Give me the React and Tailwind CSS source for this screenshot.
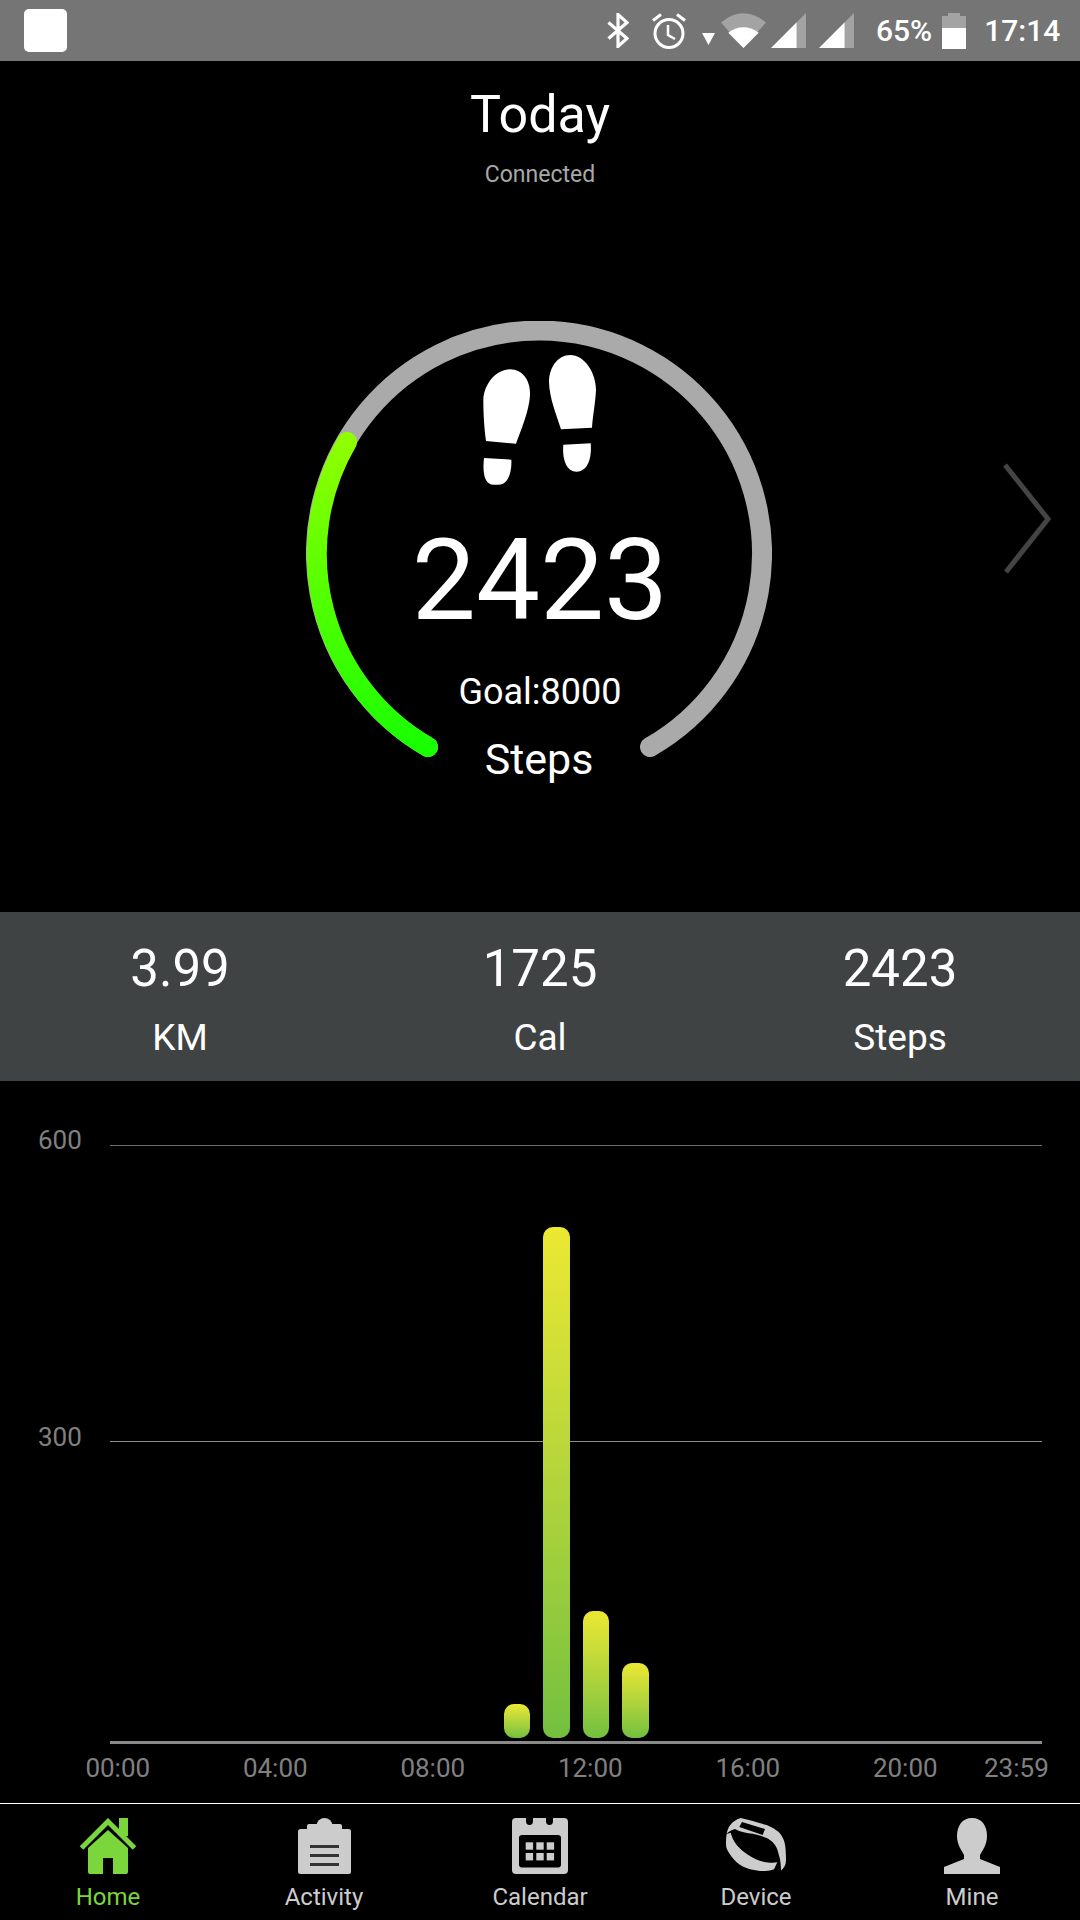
const Bluetooth = () => (
  <svg width="22" height="35" viewBox="0 0 22 35" fill="none" stroke="#fff" strokeWidth="3.2">
    <path d="M1.5 9.5 L20 25.5 L11 33.5 V1.5 L20 9.5 L1.5 25.5" />
  </svg>
);

const Alarm = () => (
  <svg width="34" height="36" viewBox="0 0 34 36" fill="none" stroke="#fff" strokeWidth="3">
    <circle cx="17" cy="20.5" r="14" />
    <path d="M16 12 V22 L23 26" strokeWidth="2.5" />
    <path d="M1 7.5 L9 1.5 M33 7.5 L25 1.5" />
  </svg>
);

const Wifi = () => (
  <svg width="45" height="35" viewBox="0 0 45 35">
    <path d="M22.5 35 L0 9.5 Q22.5 -9 45 9.5 Z" fill="#a3a3a3" />
    <path d="M22.5 35 L7.3 19.7 Q22.5 9 37.7 19.7 Z" fill="#fff" />
  </svg>
);

const Signal = () => (
  <svg width="35" height="35" viewBox="0 0 35 35">
    <path d="M25.7 9.3 L35 0 V35 H25.7 Z" fill="#a3a3a3" />
    <path d="M0 35 L25.7 9.3 V35 Z" fill="#fff" />
  </svg>
);

const Battery = () => (
  <svg width="24" height="36" viewBox="0 0 24 36">
    <path d="M6 0 H18 V3 H24 V15 H0 V3 H6 Z" fill="#a3a3a3" />
    <rect x="0" y="15" width="24" height="21" fill="#fff" />
  </svg>
);

const StatusBar = () => (
  <div className="flex h-[61px] items-center bg-[#757575] text-[30px] font-medium text-white">
    <div className="ml-[24px] h-[43px] w-[43px] rounded-[5px] bg-white" />
    <div className="ml-[540px]"><Bluetooth /></div>
    <div className="ml-[23px]"><Alarm /></div>
    <svg className="ml-[16px] mt-[17px]" width="13" height="12" viewBox="0 0 13 12">
      <path d="M0 0 H13 L6.5 12 Z" fill="#fff" />
    </svg>
    <div className="ml-[6px]"><Wifi /></div>
    <div className="ml-[5px]"><Signal /></div>
    <div className="ml-[13px]"><Signal /></div>
    <span className="ml-[22px]">65%</span>
    <div className="ml-[10px]"><Battery /></div>
    <span className="ml-[18px]">17:14</span>
  </div>
);

const Footprints = () => (
  <svg className="ml-[2px]" width="160" height="160" viewBox="0 0 480 480" fill="#fff">
    <path d="M78 303 C72 260 70 215 70 180 C72 130 110 88 150 88 C190 88 212 125 210 165 C208 210 185 265 168 311 Z" />
    <path d="M72 354 L154 359 C156 395 145 434 115 434 L100 434 C78 434 66 410 72 354 Z" />
    <path d="M303 268 C290 225 268 175 267 125 C268 80 295 45 330 45 C375 45 408 100 408 150 C406 190 398 230 396 263 Z" />
    <path d="M310 314 L392 310 C396 350 385 395 350 395 C320 395 306 360 310 314 Z" />
  </svg>
);

const Gauge = () => (
  <div className="relative ml-[306px] mt-[131px] flex h-[466px] w-[466px] flex-col items-center text-white">
    <svg className="absolute inset-0" width="466" height="466" viewBox="0 0 466 466" fill="none" strokeWidth="20" strokeLinecap="round">
      <defs>
        <linearGradient id="ringGreen" gradientUnits="userSpaceOnUse" x1="0" y1="121" x2="0" y2="426">
          <stop offset="0" stopColor="#8fff00" />
          <stop offset="1" stopColor="#19ff00" />
        </linearGradient>
      </defs>
      <path d="M122 426 A223 223 0 1 1 344 426" stroke="#aaaaaa" />
      <path d="M122 426 A223 223 0 0 1 41 121" stroke="url(#ringGreen)" />
    </svg>
    <div className="relative mt-[19px] flex flex-col items-center">
      <Footprints />
      <div className="ml-[2px] mt-[26px] text-[114px] leading-[108px]">2423</div>
      <div className="ml-[2px] mt-[36px] text-[36px] leading-[44px]">Goal:8000</div>
      <div className="mt-[20px] text-[43px] leading-[50px]">Steps</div>
    </div>
  </div>
);

const stats = [
  { value: "3.99", label: "KM" },
  { value: "1725", label: "Cal" },
  { value: "2423", label: "Steps" },
];

const Stats = () => (
  <div className="grid h-[169px] grid-cols-3 bg-[#3f4344] pt-[29px] text-center text-white">
    {stats.map((s) => (
      <div key={s.label}>
        <div className="text-[51px] leading-[56px]">{s.value}</div>
        <div className="mt-[19px] text-[37px] leading-[44px]">{s.label}</div>
      </div>
    ))}
  </div>
);

const bars = ["h-[33.5px]", "h-[510.5px]", "h-[126.5px]", "h-[74.5px]"];

const xLabels = ["00:00", "04:00", "08:00", "12:00", "16:00", "20:00"];

const Chart = () => (
  <div className="h-[722px] pt-[44px]">
    <div className="flex items-start">
      <div className="w-[110px] pl-[38px] text-[26px] leading-[30px] text-[#808080]">
        <div>600</div>
        <div className="mt-[267px]">300</div>
      </div>
      <div className="relative mt-[20px] h-[599px] w-[932px] border-b-[3px] border-[#8a8a8a]">
        <div className="absolute inset-x-0 top-0 h-px bg-[#6e6e6e]" />
        <div className="absolute inset-x-0 top-[296px] h-px bg-[#8a8a8a]" />
        <div className="absolute inset-0 flex items-end gap-[13px] pb-[3.5px] pl-[393.5px]">
          {bars.map((h) => (
            <div key={h} className={`w-[26.5px] rounded-[10px] bg-linear-to-b from-[#ece832] to-[#72c03f] ${h}`} />
          ))}
        </div>
      </div>
    </div>
    <div className="mt-[9px] flex pl-[39px] text-center text-[26px] leading-[30px] text-[#808080]">
      {xLabels.map((t) => (
        <div key={t} className="w-[157.5px]">{t}</div>
      ))}
      <div className="w-[61px] whitespace-nowrap">23:59</div>
    </div>
  </div>
);

const HomeIcon = () => (
  <svg width="60" height="56" viewBox="0 0 60 56" fill="#7ad63a">
    <path d="M3.5 30 L30 3.5 L56.5 30" fill="none" stroke="#7ad63a" strokeWidth="5" />
    <rect x="41" y="0" width="9" height="18" />
    <path d="M10 30 L30 12 L50 30 V54 Q50 56 48 56 H35 V40 H25 V56 H12 Q10 56 10 54 Z" />
  </svg>
);

const ActivityIcon = () => (
  <svg width="53" height="56" viewBox="0 0 53 56" fill="#cccccc">
    <circle cx="26.5" cy="8" r="8" />
    <rect x="9" y="6" width="35" height="10" rx="2" />
    <rect x="0" y="11" width="53" height="45" rx="2.5" />
    <g fill="#333333">
      <rect x="12" y="27" width="29" height="3" />
      <rect x="12" y="36" width="29" height="3" />
      <rect x="12" y="45" width="29" height="3" />
    </g>
  </svg>
);

const CalendarIcon = () => (
  <svg width="56" height="56" viewBox="0 0 56 56">
    <path fillRule="evenodd" fill="#cccccc" d="M4 0 H14 V3 Q14 7 17.5 7 Q21 7 21 3 V0 H34 V3 Q34 7 37.5 7 Q41 7 41 3 V0 H52 Q56 0 56 4 V52 Q56 56 52 56 H4 Q0 56 0 52 V4 Q0 0 4 0 Z M10 17 Q7 17 7 20 V46.5 Q7 49.5 10 49.5 H46 Q49 49.5 49 46.5 V20 Q49 17 46 17 Z" />
    <g fill="#cccccc">
      <rect x="13.7" y="24.3" width="7.4" height="7.4" />
      <rect x="24.3" y="24.3" width="7.4" height="7.4" />
      <rect x="34.7" y="24.3" width="7.4" height="7.4" />
      <rect x="13.7" y="35" width="7.4" height="7.4" />
      <rect x="24.3" y="35" width="7.4" height="7.4" />
      <rect x="34.7" y="35" width="7.4" height="7.4" />
    </g>
  </svg>
);

const DeviceIcon = () => (
  <svg width="60" height="56" viewBox="0 0 60 56" fill="#cccccc">
    <path fillRule="evenodd" d="M0.7 16 C1.5 10 5 3 14.7 0 C24 2 33 5 40.7 7 C48 10 54 14 55.7 18 C59 23 60 29 60 42 C60 47 58 50 55 52.7 C55 46 54 40 53.3 38.7 C52 33 51 30 49 27 C46 23 43 21 40.7 20 C36 18 30 16 22.3 15.3 C16 14 11 12.5 9 11 C5 12 2 14 0.7 16 Z M16 4 L39 11 L36.7 17 L13.3 9 Z" />
    <path d="M0.7 16 L4.7 14.7 C6 20 8 23 10.7 27 C14 31 18 34 22.3 37 C27 40 33 43 37.3 43.7 C43 45 48 45 51.3 44.3 L48 51.3 C42 53.5 36 53 34 53 C28 52 22 51 17.3 48.7 C12 46 8 42 5.7 38.7 C2 34 0 30 0 27 C0 23 0 19 0.7 16 Z" />
  </svg>
);

const MineIcon = () => (
  <svg width="56" height="56" viewBox="0 0 56 56" fill="#cccccc">
    <path d="M28 0 C38 0 43 8 43 18 C43 27 38 33 36 37 V41 L56 49 V56 H0 V49 L20 41 V37 C18 33 13 27 13 18 C13 8 18 0 28 0 Z" />
  </svg>
);

const tabs = [
  { label: "Home", Icon: HomeIcon, color: "text-[#7ad63a]" },
  { label: "Activity", Icon: ActivityIcon, color: "text-[#cccccc]" },
  { label: "Calendar", Icon: CalendarIcon, color: "text-[#cccccc]" },
  { label: "Device", Icon: DeviceIcon, color: "text-[#cccccc]" },
  { label: "Mine", Icon: MineIcon, color: "text-[#cccccc]" },
];

const TabBar = () => (
  <div className="grid h-[117px] grid-cols-5 border-t border-white pt-[14px]">
    {tabs.map(({ label, Icon, color }) => (
      <div key={label} className={`flex flex-col items-center ${color}`}>
        <Icon />
        <span className="mt-[8px] text-[24px] leading-[30px]">{label}</span>
      </div>
    ))}
  </div>
);

export default function App() {
  return (
    <div className="h-[1920px] w-[1080px] overflow-hidden bg-black font-[Roboto,sans-serif]">
      <StatusBar />
      <div className="relative h-[851px]">
        <div className="pt-[26px] text-center">
          <div className="text-[52px] leading-[56px] text-white">Today</div>
          <div className="mt-[17px] text-[23px] leading-[30px] text-[#a8a8a8]">Connected</div>
        </div>
        <Gauge />
        <svg className="absolute left-[1000px] top-[400px]" width="56" height="116" viewBox="0 0 56 116" fill="none" stroke="#444444" strokeWidth="5">
          <path d="M5 4 L48 58 L6 111" />
        </svg>
      </div>
      <Stats />
      <Chart />
      <TabBar />
    </div>
  );
}
